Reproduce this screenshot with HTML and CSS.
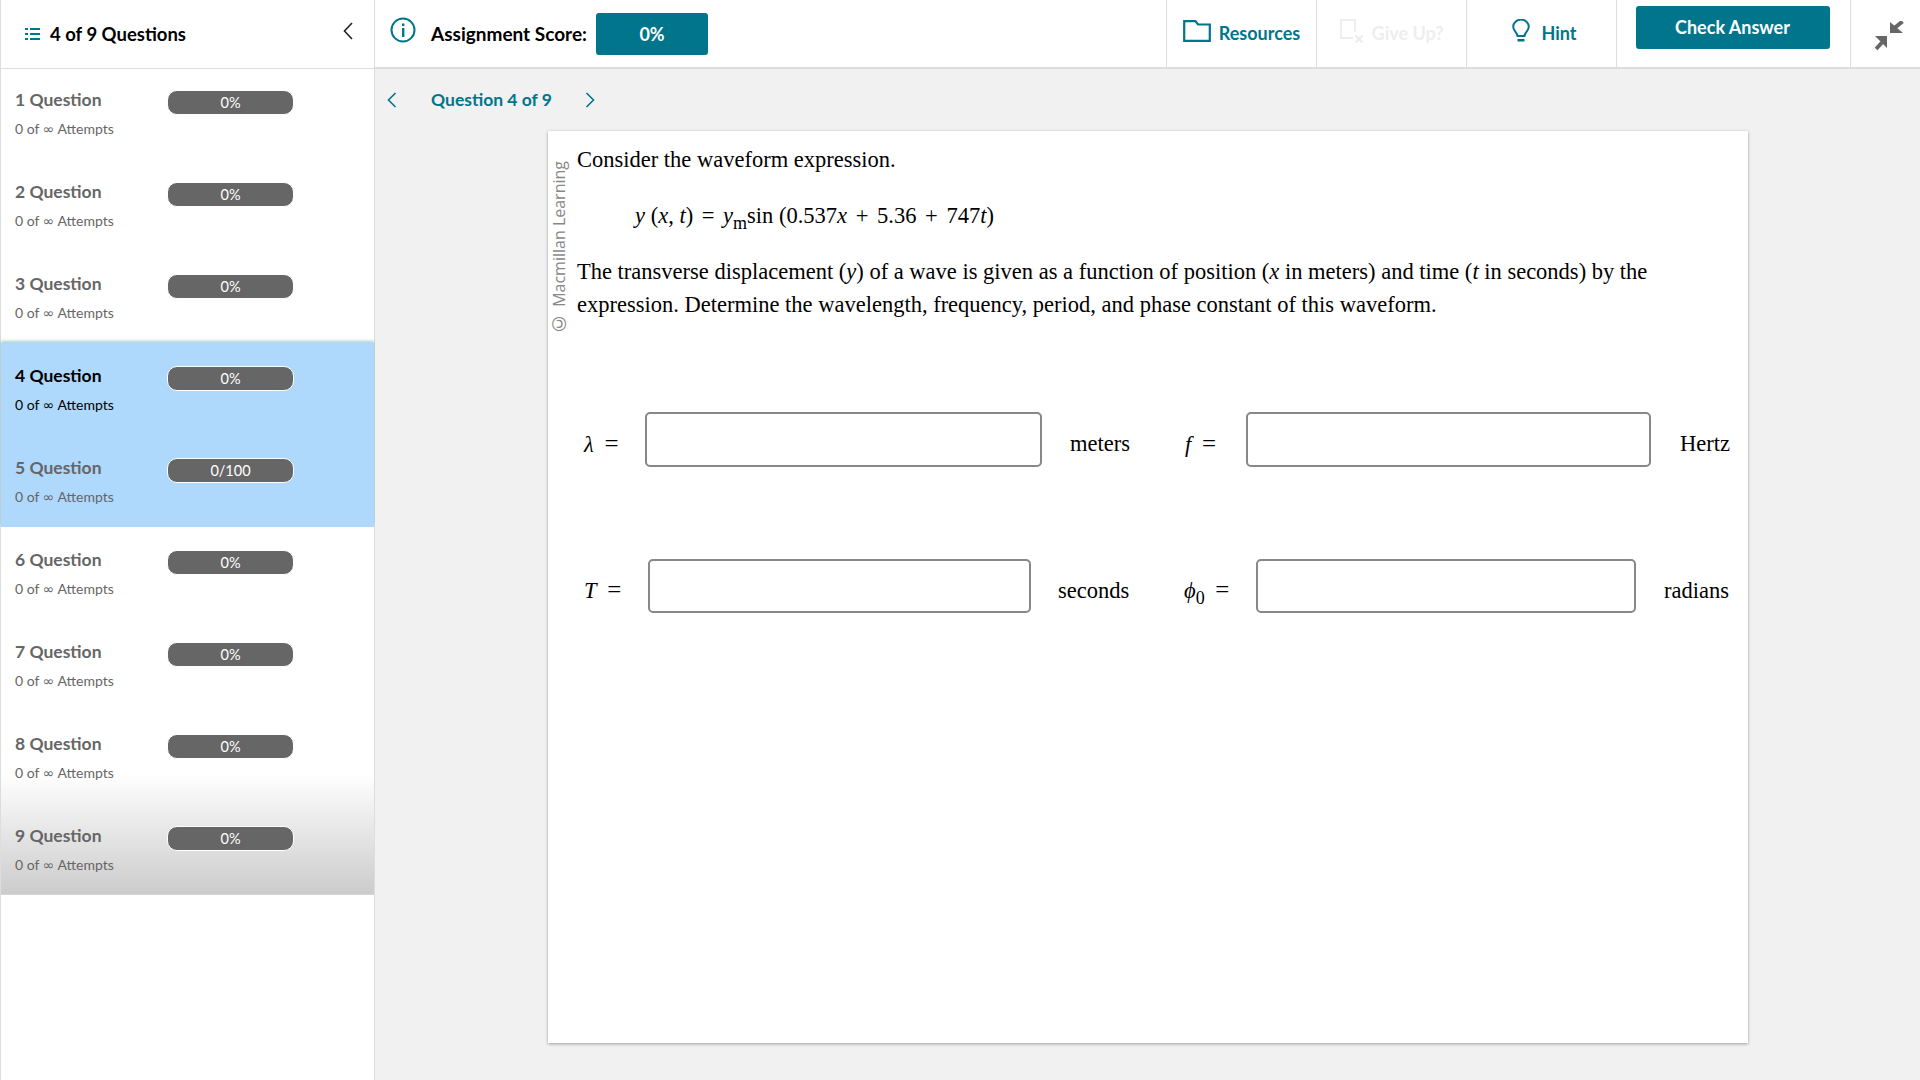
FILE: index.html
```html
<!DOCTYPE html>
<html lang="en">
<head>
<meta charset="utf-8">
<title>Question 4 of 9</title>
<link rel="stylesheet" href="styles.css">
</head>
<body>
<div class="app">
  <header class="top">
    <div class="top-left">
      <svg class="list-icon" width="15" height="14" viewBox="0 0 15 14"><g fill="#00758c"><rect x="0" y="1" width="3" height="2"/><rect x="5" y="1" width="10" height="2"/><rect x="0" y="6" width="3" height="2"/><rect x="5" y="6" width="10" height="2"/><rect x="0" y="11" width="3" height="2"/><rect x="5" y="11" width="10" height="2"/></g></svg>
      <span class="top-title">4 of 9 Questions</span>
      <svg class="collapse" width="10" height="18" viewBox="0 0 10 18"><path d="M9 1 1.500 9 9 17" fill="none" stroke="#222" stroke-width="1.600"/></svg>
    </div>
    <div class="score-area">
      <svg class="info" width="26" height="26" viewBox="0 0 26 26"><circle cx="13" cy="13" r="11.500" fill="none" stroke="#00758c" stroke-width="2"/><rect x="12" y="11" width="2.400" height="9" fill="#00758c"/><rect x="12" y="6.500" width="2.400" height="2.600" fill="#00758c"/></svg>
      <span class="score-label">Assignment Score:</span>
      <span class="score-box">0%</span>
    </div>
    <div class="tool"><svg width="28" height="22" viewBox="0 0 28 22"><path d="M1.200 20.800V1.200H12.500L15 4.500H26.800V20.800Z" fill="none" stroke="#00758c" stroke-width="2.200"/></svg><span>Resources</span></div>
    <div class="tool disabled"><svg width="24" height="24" viewBox="0 0 24 24"><path d="M13 19H1V1H15V13" fill="none" stroke="#eee" stroke-width="2"/><path d="M15.500 16.500l7 7M22.500 16.500l-7 7" stroke="#eee" stroke-width="2.200"/></svg><span>Give Up?</span></div>
    <div class="tool hint"><svg width="18" height="24" viewBox="0 0 18 24"><path d="M5.500 17C5 13 1.200 12 1.200 7.800A7.800 7.200 0 0 1 16.800 7.800C16.800 12 13 13 12.500 17Z" fill="none" stroke="#00758c" stroke-width="2"/><rect x="5.500" y="20" width="7" height="2.500" fill="#00758c"/></svg><span>Hint</span></div>
    <div class="check-cell"><button class="check">Check Answer</button></div>
    <div class="expand"><svg width="30" height="30" viewBox="0 0 30 30"><g fill="#666" stroke="none"><path d="M15 12V1L28 12Z"/><path d="M12 15H0L12 27Z"/></g><g stroke="#666" stroke-width="4"><path d="M20 6.500 27.500 0.500"/><path d="M7 21.500 1 28"/></g></svg></div>
  </header>
  <div class="body">
    <aside class="side">
      <div class="rows">
        <div class="row"><div class="row-main"><span class="q">1 Question</span><span class="pill">0%</span></div><div class="att">0 of <span class="inf">∞</span> Attempts</div></div>
        <div class="row"><div class="row-main"><span class="q">2 Question</span><span class="pill">0%</span></div><div class="att">0 of <span class="inf">∞</span> Attempts</div></div>
        <div class="row"><div class="row-main"><span class="q">3 Question</span><span class="pill">0%</span></div><div class="att">0 of <span class="inf">∞</span> Attempts</div></div>
        <div class="pool">
          <div class="row current"><div class="row-main"><span class="q">4 Question</span><span class="pill">0%</span></div><div class="att">0 of <span class="inf">∞</span> Attempts</div></div>
          <div class="row"><div class="row-main"><span class="q">5 Question</span><span class="pill">0/100</span></div><div class="att">0 of <span class="inf">∞</span> Attempts</div></div>
        </div>
        <div class="row"><div class="row-main"><span class="q">6 Question</span><span class="pill">0%</span></div><div class="att">0 of <span class="inf">∞</span> Attempts</div></div>
        <div class="row"><div class="row-main"><span class="q">7 Question</span><span class="pill">0%</span></div><div class="att">0 of <span class="inf">∞</span> Attempts</div></div>
        <div class="fade">
          <div class="row"><div class="row-main"><span class="q">8 Question</span><span class="pill">0%</span></div><div class="att">0 of <span class="inf">∞</span> Attempts</div></div>
          <div class="row"><div class="row-main"><span class="q">9 Question</span><span class="pill">0%</span></div><div class="att">0 of <span class="inf">∞</span> Attempts</div></div>
        </div>
      </div>
    </aside>
    <main class="main">
      <nav class="qnav">
        <svg width="10" height="16" viewBox="0 0 10 16"><path d="M8.500 1 1.500 8 8.500 15" fill="none" stroke="#00758c" stroke-width="1.600"/></svg>
        <span class="qnav-label">Question 4 of 9</span>
        <svg width="10" height="16" viewBox="0 0 10 16"><path d="M1.500 1 8.500 8 1.500 15" fill="none" stroke="#00758c" stroke-width="1.600"/></svg>
      </nav>
      <section class="card">
        <div class="copy"><span class="c">©</span> Macmillan Learning</div>
        <p class="intro">Consider the waveform expression.</p>
        <p class="eq"><i>y</i> (<i>x</i>, <i>t</i>) <span class="op">=</span> <i>y</i><sub>m</sub>sin (0.537<i>x</i> <span class="op">+</span> 5.36 <span class="op">+</span> 747<i>t</i>)</p>
        <p class="desc">The transverse displacement (<i>y</i>) of a wave is given as a function of position (<i>x</i> in meters) and time (<i>t</i> in seconds) by the expression. Determine the wavelength, frequency, period, and phase constant of this waveform.</p>
        <div class="fields first">
          <span class="lab l1"><i>λ</i> <span class="op">=</span></span><span class="box b1"></span><span class="unit u1">meters</span>
          <span class="lab l2"><i>f</i> <span class="op">=</span></span><span class="box b2"></span><span class="unit u2">Hertz</span>
        </div>
        <div class="fields second">
          <span class="lab l3"><i>T</i> <span class="op">=</span></span><span class="box b3"></span><span class="unit u3">seconds</span>
          <span class="lab l4"><i>ϕ</i><sub>0</sub> <span class="op">=</span></span><span class="box b4"></span><span class="unit u4">radians</span>
        </div>
      </section>
    </main>
  </div>
</div>
</body>
</html>
```
FILE: styles.css
```css
* { box-sizing: border-box; }
html, body { margin: 0; height: 100%; overflow: hidden; }
body { font-family: "Lato", "Noto Sans", sans-serif; color: #000; background: #fff; }
.app { height: 1080px; display: flex; flex-direction: column; }

.top { height: 69px; flex: none; display: flex; background: #fff; }
.top-left { width: 375px; flex: none; display: flex; align-items: center; padding: 0 21px 0 24px; border-left: 1px solid #ddd; border-right: 1px solid #ddd; border-bottom: 1px solid #ddd; }
.top-title { margin: -1px 0 0 10px; font-size: 18.500px; font-weight: 700; flex: 1; }
.collapse { margin-top: -6px; }
.score-area { flex: 1; display: flex; align-items: center; padding-left: 15px; border-bottom: 2px solid #ddd; }
.info { margin-top: -8px; }
.score-label { margin-left: 15px; font-size: 19px; font-weight: 700; width: 165px; white-space: nowrap; }
.score-box { width: 112px; height: 42px; background: #00758c; color: #fff; border-radius: 3px; display: flex; align-items: center; justify-content: center; font-size: 18px; font-weight: 700; }

.tool { width: 150px; flex: none; display: flex; align-items: center; justify-content: center; gap: 8px; border-left: 1px solid #ddd; border-bottom: 2px solid #ddd; color: #00758c; font-size: 18px; font-weight: 700; padding-bottom: 2px; }
.tool svg { margin-top: -4px; }
.tool span { margin-top: 0; }
.tool.disabled { color: #eee; }
.tool.hint { padding-left: 6px; gap: 11px; }
.check-cell { width: 234px; flex: none; display: flex; justify-content: center; padding: 6px 2px 0 0; border-left: 1px solid #ddd; border-bottom: 2px solid #ddd; }
.check { width: 194px; height: 43px; border: 0; border-radius: 3px; background: #00758c; color: #fff; font-family: inherit; font-size: 18px; font-weight: 700; padding: 0 0 2px; }
.expand { width: 70px; flex: none; padding: 21px 0 0 24px; border-left: 1px solid #ddd; border-bottom: 2px solid #ddd; }

.body { flex: 1; display: flex; min-height: 0; }
.side { width: 375px; flex: none; background: #fff; border-left: 1px solid #ddd; border-right: 1px solid #ddd; }
.rows { margin-top: -2px; }
.row { height: 92px; padding: 23px 0 0 14px; color: #666; }
.row-main { display: flex; align-items: center; height: 25px; }
.q { width: 152px; font-size: 17.500px; font-weight: 700; line-height: 18px; margin-top: -5px; }
.pill { width: 127px; height: 25px; border-radius: 10px; border: 1px solid #fff; background: #666; color: #fff; font-size: 14.500px; display: flex; align-items: center; justify-content: center; }
.att { margin-top: 5px; font-size: 14px; line-height: 17px; }
.inf { font-family: "DejaVu Sans", sans-serif; font-size: 14px; line-height: 1; }
.pool { background: #afd8fd; box-shadow: 0 -2px 3px rgba(0, 117, 140, .35); }
.current { color: #000; }
.fade { background: linear-gradient(to bottom, #fff 0, #fff 62px, #ccc 183px, #ddd 184px); }

.main { flex: 1; background: #f1f1f1; padding-left: 12px; min-width: 0; }
.qnav { height: 62px; display: flex; align-items: center; padding-bottom: 1px; }
.qnav-label { margin: 0 33px 0 34px; width: 121px; color: #00758c; font-size: 17.500px; font-weight: 700; white-space: nowrap; }
.card { position: relative; width: 1200px; height: 912px; margin-left: 161px; background: #fff; box-shadow: 0 1px 3px rgba(0, 0, 0, .35); padding: 12px 0 0 29px; font-family: "Liberation Serif", serif; font-size: 22.500px; line-height: 33px; }
.copy { position: absolute; left: 1px; top: 31px; height: 175px; width: 20px; writing-mode: vertical-rl; transform: rotate(180deg); font-family: "Open Sans", sans-serif; font-size: 16px; line-height: 20px; color: #888; white-space: nowrap; }
.c { font-size: 19px; }
.card p { margin: 0; }
.card .eq { margin: 23px 0 0 58px; }
.op { margin: 0 3px; }
.card sub { font-size: 18px; line-height: 0; }
.card .desc { margin-top: 23px; width: 1100px; }
.fields { display: flex; align-items: center; height: 54px; }
.first { margin-top: 91px; height: 55px; }
.second { margin-top: 92px; }
.lab, .unit { margin-top: 8px; white-space: nowrap; }
.lab { margin-left: 7px; }
.lab .op { margin: 0 0 0 5px; font-size: 25px; }
.box { display: block; height: 100%; border: 2px solid #888; border-radius: 5px; background: #fff; }
.l1 { width: 61px; }
.b1 { width: 397px; }
.u1 { margin-left: 28px; width: 59px; }
.l2 { margin-left: 56px; width: 61px; }
.b2 { width: 405px; }
.u2 { margin-left: 29px; }
.l3 { width: 64px; }
.b3 { width: 383px; }
.u3 { margin-left: 27px; width: 72px; }
.l4 { margin-left: 54px; width: 72px; }
.b4 { width: 380px; }
.u4 { margin-left: 28px; }
```
